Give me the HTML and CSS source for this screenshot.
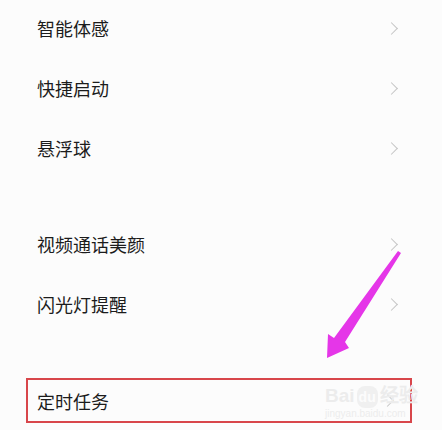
FILE: index.html
```html
<!DOCTYPE html>
<html lang="zh-CN">
<head>
  <meta charset="UTF-8">
  <title>设置</title>
  <link rel="stylesheet" href="styles.css">
</head>
<body>
  <div class="page">
    <!-- 第一组 -->
    <ul class="group group-first">
      <li class="row"><span class="label">智能体感</span><span class="chevron"></span></li>
      <li class="row"><span class="label">快捷启动</span><span class="chevron"></span></li>
      <li class="row"><span class="label">悬浮球</span><span class="chevron"></span></li>
    </ul>

    <!-- 第二组 -->
    <ul class="group">
      <li class="row"><span class="label">视频通话美颜</span><span class="chevron"></span></li>
      <li class="row"><span class="label">闪光灯提醒</span><span class="chevron"></span></li>
    </ul>

    <!-- 标注项 -->
    <div class="marked">
      <div class="row row-marked"><span class="label">定时任务</span><span class="chevron"></span></div>
    </div>

    <!-- 箭头 -->
    <svg class="arrow" width="442" height="430" viewBox="0 0 442 430">
      <path d="M398 251 L401 253 L345 342 L349 348 L327 358 L328 334 L334 338 Z" fill="#e536e8"/>
    </svg>

    <!-- 水印 -->
    <div class="watermark">
      <div class="wm-logo">Bai<span class="wm-du">du</span>经验</div>
      <div class="wm-url">jingyan.baidu.com</div>
    </div>
  </div>
</body>
</html>
```

FILE: styles.css
```css
/* 基本スタイル */
body {
  margin: 0;
  background-color: #fcfcfc;
  font-family: "Noto Sans CJK SC", "Noto Sans", sans-serif;
}
.page {
  position: relative;
  width: 442px;
  height: 430px;
  overflow: hidden;
}
.group {
  list-style: none;
  margin: 0 0 36px 0;
  padding: 0;
}
.group-first {
  margin-top: -2px;
}
.row {
  display: flex;
  align-items: center;
  justify-content: space-between;
  height: 60px;
  padding: 0 46px 0 37px;
}
.label {
  font-size: 18px;
  color: #1c1c1c;
}
.chevron {
  width: 8px;
  height: 8px;
  border-top: 1px solid #c4c4c4;
  border-right: 1px solid #c4c4c4;
  transform: rotate(45deg);
}

/* 标注 */
.marked {
  margin: 44px 30px 0 26px;
  border: 2px solid #d8464b;
}
.row-marked {
  height: 41px;
  padding: 0 18px 0 9px;
}
.arrow {
  position: absolute;
  left: 0;
  top: 0;
}
.watermark {
  position: absolute;
  left: 325px;
  top: 385px;
  color: #ececec;
  font-family: "Liberation Sans", sans-serif;
}
.wm-logo {
  font-size: 19px;
  font-weight: bold;
  line-height: 22px;
}
.wm-du {
  display: inline-block;
  background-color: #f0f0f0;
  color: #fcfcfc;
  border-radius: 8px;
  padding: 0 2px;
  margin: 0 2px;
  font-size: 14px;
}
.wm-url {
  font-size: 10px;
  line-height: 12px;
}
```
